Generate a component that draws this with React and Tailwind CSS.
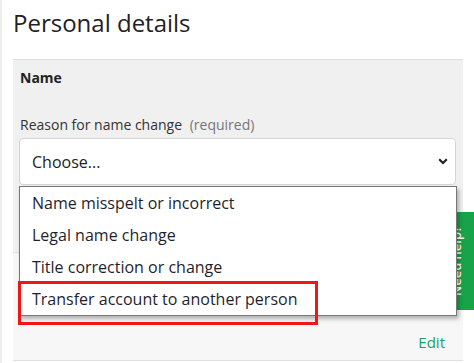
const options = [
  'Name misspelt or incorrect',
  'Legal name change',
  'Title correction or change',
  'Transfer account to another person',
]

export default function App() {
  return (
    <div className="relative w-[474px] h-[363px] overflow-hidden bg-white border-l-2 border-[#ececec] text-[#222]" style={{ fontFamily: '"Open Sans", "Noto Sans", sans-serif' }}>
      <div className="pl-[11px] pr-[11px]">
        <h1 className="pt-[7px] text-[24px] leading-[32px] font-normal text-[#222]">Personal details</h1>

        <div className="mt-[20px] border-t border-[#dcdcdc] bg-[#f0f0f0] pl-[6px] pr-[7px] pt-[8px] pb-[67px]">
          <div className="pl-px text-[14px] leading-[20px] font-bold text-[#222]">Name</div>
          <label className="mt-[27px] block pl-px text-[14px] leading-[20px] text-[#333]">
            Reason for name change <span className="ml-1 text-[#777]">(required)</span>
          </label>
          <div className="mt-[3px] flex h-[47px] items-center justify-between rounded-[4px] border border-[#d4d4d4] bg-white pl-[12px] pr-[5px]">
            <span className="text-[16px] text-[#222]">Choose...</span>
            <svg width="10" height="7" viewBox="0 0 10 7" className="mr-[2px]">
              <path d="M1.2 1.3 L5 5 L8.8 1.3" fill="none" stroke="#222" strokeWidth="2.2" />
            </svg>
          </div>
        </div>

        <div className="flex h-[109px] items-end justify-end border-t border-b border-[#dedede] bg-[#f7f7f7] pr-[18px] pb-[8px]">
          <a className="text-[15px] leading-[20px] text-[#16a35f]">Edit</a>
        </div>
      </div>

      <div className="absolute left-[436px] top-[212px] flex h-[98px] w-[38px] items-center justify-center bg-[#18a24a]">
        <span className="rotate-180 text-[13px] font-semibold text-white [writing-mode:vertical-rl]">Need help?</span>
      </div>

      <ul className="absolute left-[17px] top-[186px] w-[438px] border border-[#767676] bg-white shadow-[2px_3px_4px_rgba(0,0,0,0.28)]">
        {options.map((o) => (
          <li key={o} className="flex h-[32px] items-center pl-[12px] text-[16px] text-[#1f1f2e]">{o}</li>
        ))}
      </ul>

      <div className="pointer-events-none absolute left-[16px] top-[281px] h-[44px] w-[300px] border-[3px] border-[#f01616]" />
    </div>
  )
}
